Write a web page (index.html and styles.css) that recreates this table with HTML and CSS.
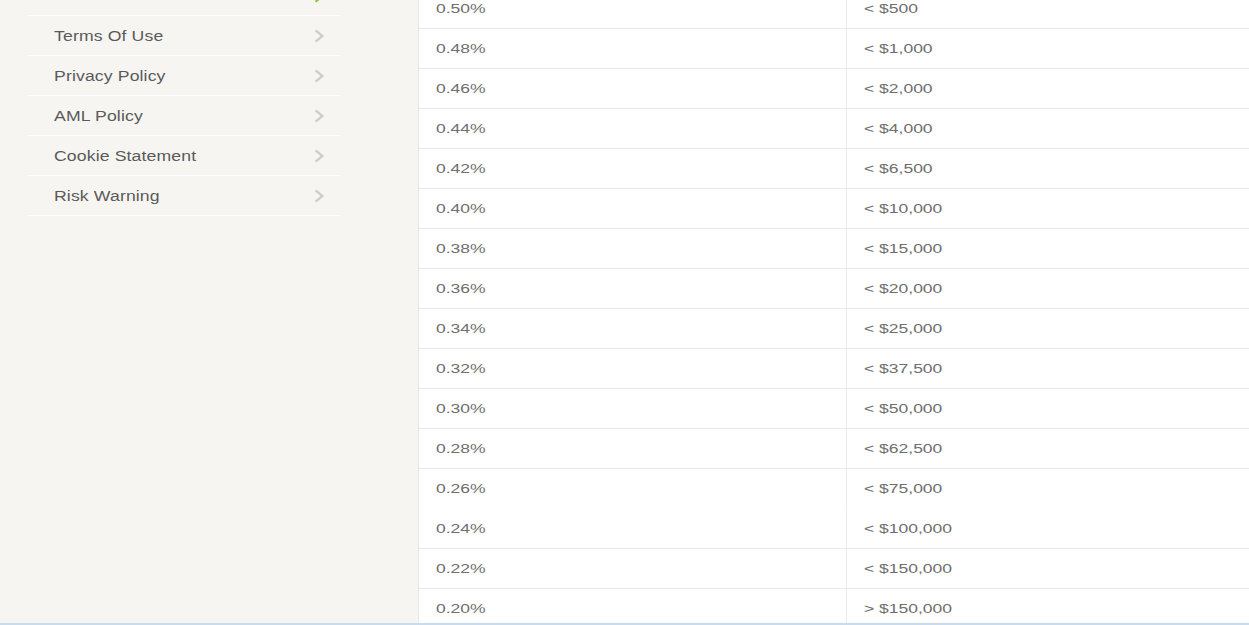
FILE: index.html
```html
<!DOCTYPE html>
<html>
<head>
<meta charset="utf-8">
<link rel="stylesheet" href="styles.css">
</head>
<body>
<div class="page">
  <aside class="sidebar">
    <ul class="menu">
      <li class="item active"><span class="label"></span><svg class="chev" viewBox="0 0 12 14"><polyline points="3,2 9,7 3,12"/></svg></li>
      <li class="item"><span class="label">Terms Of Use</span><svg class="chev" viewBox="0 0 12 14"><polyline points="3,2 9,7 3,12"/></svg></li>
      <li class="item"><span class="label">Privacy Policy</span><svg class="chev" viewBox="0 0 12 14"><polyline points="3,2 9,7 3,12"/></svg></li>
      <li class="item"><span class="label">AML Policy</span><svg class="chev" viewBox="0 0 12 14"><polyline points="3,2 9,7 3,12"/></svg></li>
      <li class="item"><span class="label">Cookie Statement</span><svg class="chev" viewBox="0 0 12 14"><polyline points="3,2 9,7 3,12"/></svg></li>
      <li class="item"><span class="label">Risk Warning</span><svg class="chev" viewBox="0 0 12 14"><polyline points="3,2 9,7 3,12"/></svg></li>
    </ul>
  </aside>
  <main class="main">
    <div class="table">
      <div class="row"><div class="cell"><span>0.50%</span></div><div class="cell"><span>&lt; $500</span></div></div>
      <div class="row"><div class="cell"><span>0.48%</span></div><div class="cell"><span>&lt; $1,000</span></div></div>
      <div class="row"><div class="cell"><span>0.46%</span></div><div class="cell"><span>&lt; $2,000</span></div></div>
      <div class="row"><div class="cell"><span>0.44%</span></div><div class="cell"><span>&lt; $4,000</span></div></div>
      <div class="row"><div class="cell"><span>0.42%</span></div><div class="cell"><span>&lt; $6,500</span></div></div>
      <div class="row"><div class="cell"><span>0.40%</span></div><div class="cell"><span>&lt; $10,000</span></div></div>
      <div class="row"><div class="cell"><span>0.38%</span></div><div class="cell"><span>&lt; $15,000</span></div></div>
      <div class="row"><div class="cell"><span>0.36%</span></div><div class="cell"><span>&lt; $20,000</span></div></div>
      <div class="row"><div class="cell"><span>0.34%</span></div><div class="cell"><span>&lt; $25,000</span></div></div>
      <div class="row"><div class="cell"><span>0.32%</span></div><div class="cell"><span>&lt; $37,500</span></div></div>
      <div class="row"><div class="cell"><span>0.30%</span></div><div class="cell"><span>&lt; $50,000</span></div></div>
      <div class="row"><div class="cell"><span>0.28%</span></div><div class="cell"><span>&lt; $62,500</span></div></div>
      <div class="row noline"><div class="cell"><span>0.26%</span></div><div class="cell"><span>&lt; $75,000</span></div></div>
      <div class="row"><div class="cell"><span>0.24%</span></div><div class="cell"><span>&lt; $100,000</span></div></div>
      <div class="row"><div class="cell"><span>0.22%</span></div><div class="cell"><span>&lt; $150,000</span></div></div>
      <div class="row"><div class="cell"><span>0.20%</span></div><div class="cell"><span>&gt; $150,000</span></div></div>
    </div>
  </main>
</div>
<div class="footer-line"></div>
</body>
</html>
```

FILE: styles.css
```css
html, body {
  margin: 0;
  padding: 0;
  height: 100%;
  overflow: hidden;
  background: #ffffff;
  font-family: "Liberation Sans", Arial, sans-serif;
}

.page {
  display: flex;
  margin-top: -24px;
  min-height: 700px;
}

.sidebar {
  width: 418px;
  flex: none;
  background: #f6f5f1;
}

.menu {
  list-style: none;
  margin: 0;
  padding: 0 0 0 28px;
  width: 312px;
}

.item {
  height: 39px;
  border-bottom: 1px solid #ffffff;
  display: flex;
  align-items: center;
  justify-content: space-between;
  padding: 0 14px 0 26px;
  font-size: 14px;
  color: #5a5a5a;
}

.label {
  display: inline-block;
  transform: scaleX(1.26);
  transform-origin: left center;
  letter-spacing: 0.1px;
}

.chev {
  width: 14px;
  height: 16px;
  fill: none;
  stroke: #cdcdcd;
  stroke-width: 2;
}

.item.active .chev {
  stroke: #8cc63f;
}

.main {
  flex: 1;
  background: #ffffff;
  border-left: 1px solid #e6e6e6;
  padding-top: 13px;
}

.row {
  display: grid;
  grid-template-columns: 427px 1fr;
  height: 39px;
  border-bottom: 1px solid #e8e8e8;
}

.row.noline {
  border-bottom-color: transparent;
}

.cell {
  display: flex;
  align-items: center;
  padding-left: 17px;
  font-size: 12.5px;
  color: #6e6e6e;
}

.cell span {
  display: inline-block;
  transform: scaleX(1.4);
  transform-origin: left center;
}

.cell + .cell {
  border-left: 1px solid #e8e8e8;
}

.footer-line {
  position: fixed;
  left: 0;
  right: 0;
  bottom: 0;
  height: 2px;
  background: #c9dcef;
}
```
